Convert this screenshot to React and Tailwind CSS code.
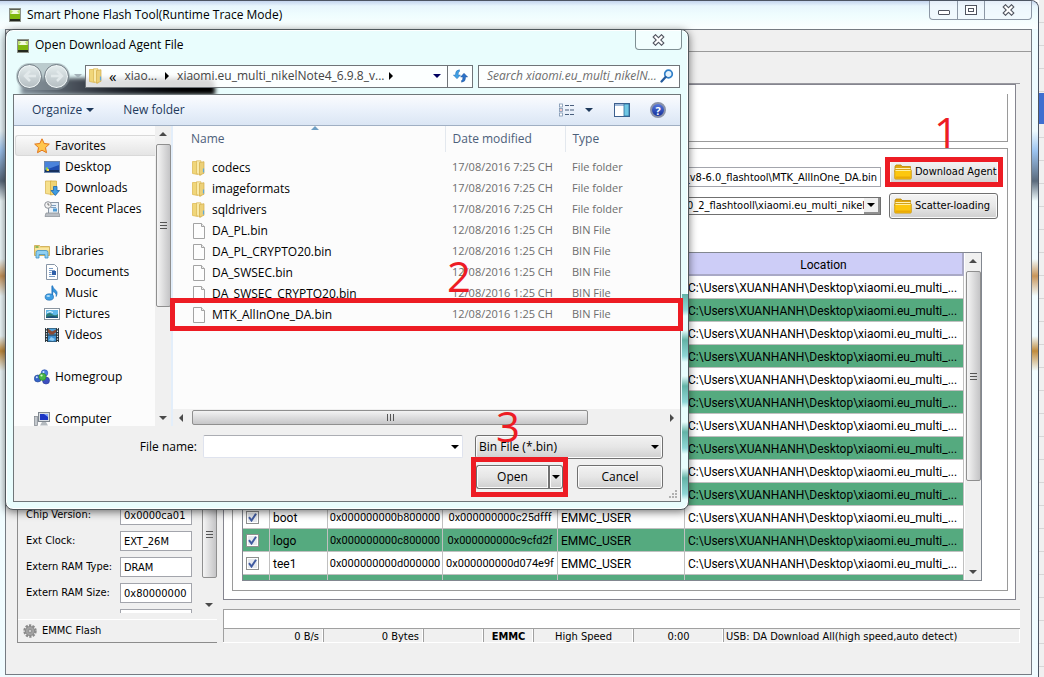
import React, { useState } from 'react';
import clsx from 'clsx';

const LOCATION = 'C:\\Users\\XUANHANH\\Desktop\\xiaomi.eu_multi_...';

const PARTITIONS = [
  ...Array.from({ length: 10 }, () => ({})),
  { name: 'boot', begin: '0x000000000b800000', end: '0x000000000c25dfff', region: 'EMMC_USER' },
  { name: 'logo', begin: '0x000000000c800000', end: '0x000000000c9cfd2f', region: 'EMMC_USER' },
  { name: 'tee1', begin: '0x000000000d000000', end: '0x000000000d074e9f', region: 'EMMC_USER' },
  { last: true },
];

const CHIP_FIELDS = [
  { id: 'chip-version', label: 'Chip Version:', value: '0x0000ca01' },
  { id: 'ext-clock', label: 'Ext Clock:', value: 'EXT_26M' },
  { id: 'ram-type', label: 'Extern RAM Type:', value: 'DRAM' },
  { id: 'ram-size', label: 'Extern RAM Size:', value: '0x80000000' },
];

const FILES = [
  { name: 'codecs', date: '17/08/2016 7:25 CH', folder: true },
  { name: 'imageformats', date: '17/08/2016 7:25 CH', folder: true },
  { name: 'sqldrivers', date: '17/08/2016 7:25 CH', folder: true },
  { name: 'DA_PL.bin', date: '12/08/2016 1:25 CH' },
  { name: 'DA_PL_CRYPTO20.bin', date: '12/08/2016 1:25 CH' },
  { name: 'DA_SWSEC.bin', date: '12/08/2016 1:25 CH' },
  { name: 'DA_SWSEC_CRYPTO20.bin', date: '12/08/2016 1:25 CH' },
  { name: 'MTK_AllInOne_DA.bin', date: '12/08/2016 1:25 CH' },
];

/* ---------- Icons ---------- */

function AppIcon() {
  return (
    <svg width="12" height="14" viewBox="0 0 12 14" className="shrink-0">
      <rect x="0.5" y="0.5" width="11" height="13" fill="#5b6056" stroke="#8d9289" />
      <rect x="1" y="2" width="10" height="4" fill="#b9dc6c" />
      <path d="M2.500 2l1.500 1.500h4L9.500 2M2.500 6Q3 3.500 6 3.500T9.500 6z" fill="#f2fadf" stroke="#f2fadf" strokeWidth="0.6" />
      <rect x="1" y="6" width="10" height="5" fill="#7fb80e" />
      <rect x="1" y="11" width="10" height="2" fill="#23281f" />
    </svg>
  );
}

function CloseGlyph() {
  return (
    <svg width="13" height="12" viewBox="0 0 13 12">
      <path d="M3.500 3l6 6M9.500 3l-6 6" stroke="#50545f" strokeWidth="4.400" strokeLinecap="square" />
      <path d="M3.500 3l6 6M9.500 3l-6 6" stroke="#fff" strokeWidth="2.200" strokeLinecap="square" />
    </svg>
  );
}

function Triangle({ dir = 'down', color = '#000', className }) {
  const paths = {
    down: 'M0 2h8L4 6z',
    up: 'M0 6h8L4 2z',
    left: 'M6 0v8L2 4z',
    right: 'M2 0v8l4-4z',
  };
  return (
    <svg width="8" height="8" viewBox="0 0 8 8" className={clsx('shrink-0', className)}>
      <path d={paths[dir]} fill={color} />
    </svg>
  );
}

function FolderIcon() {
  return (
    <svg width="16" height="16" viewBox="0 0 16 16" className="shrink-0">
      <path d="M1.500 1.500h5v13l-5-1z" fill="#f0d679" stroke="#dcb64a" strokeWidth="0.7" />
      <path d="M5.500 .8h4.500v14.400l-4.500-1.700z" fill="#f9eaa8" stroke="#d9b552" strokeWidth="0.7" />
      <path d="M8.500 2.500l4.500-.8v11.600l-4.500 1.900z" fill="#ecd078" stroke="#d3ac48" strokeWidth="0.7" />
      <path d="M12.500 8.500v4" stroke="#5fa9d8" strokeWidth="1.200" />
    </svg>
  );
}

function FileIcon() {
  return (
    <svg width="16" height="16" viewBox="0 0 16 16" className="shrink-0">
      <path d="M2.500.5h8l3 3v12h-11z" fill="#fdfdfd" stroke="#a3a3a3" />
      <path d="M10.500.5v3h3" fill="#ececec" stroke="#a3a3a3" />
    </svg>
  );
}

function YellowFolder() {
  return (
    <svg width="18" height="16" viewBox="0 0 18 16" className="shrink-0">
      <path d="M1 2.500L2 1h5l1 1.500h8.500V8H1z" fill="#e0a60c" stroke="#b98606" strokeWidth="0.8" />
      <path d="M1.500 4h15v3h-15z" fill="#fff3b8" />
      <rect x="0.7" y="5.500" width="16.600" height="9.600" rx="1" fill="#fcc70f" stroke="#c8930a" strokeWidth="0.8" />
      <path d="M1.500 6.500h15" stroke="#fff0a0" />
      <path d="M1.500 12.500h15v2h-15z" fill="#eaa907" />
    </svg>
  );
}

function GearIcon() {
  return (
    <svg width="14" height="14" viewBox="0 0 14 14" className="shrink-0">
      <circle cx="7" cy="7" r="5.400" fill="none" stroke="#8a8a8a" strokeWidth="2.600" strokeDasharray="2.200 1.200" />
      <circle cx="7" cy="7" r="4.600" fill="#a2a2a2" stroke="#8b8b8b" />
      <circle cx="7" cy="7" r="1.800" fill="#c9c9c9" stroke="#808080" strokeWidth="0.7" />
    </svg>
  );
}

const TREE_ART = {
  star: (
    <path
      d="M8 .8l2.200 4.700 5.100.6-3.800 3.500 1 5.100L8 12.200l-4.500 2.500 1-5.100L.7 6.100l5.100-.6z"
      fill="#ffc64d"
      stroke="#e2761b"
      strokeWidth="1"
    />
  ),
  desktop: (
    <>
      <rect x="0.5" y="2.500" width="15" height="11" fill="#1f4fb2" stroke="#6b86ad" />
      <path d="M1 3h14v3L1 11z" fill="#4a83db" />
      <rect x="1" y="11" width="14" height="2" fill="#16305f" />
      <path d="M1.500 9l2-1 1 3-2 1z" fill="#8ed04a" />
      <rect x="3" y="10" width="2" height="2" fill="#ffd34a" />
    </>
  ),
  downloads: (
    <>
      <path d="M1.500 1h6v13.500l-6-1z" fill="#f6e08c" stroke="#d6b04a" strokeWidth="0.7" />
      <path d="M6.500 1h6v13l-6 1z" fill="#efd375" stroke="#d3a936" strokeWidth="0.7" />
      <path d="M9.500 6.500h3.500v4h2.500l-4.200 5-4.300-5h2.500z" fill="#3f9be0" stroke="#1c66ac" strokeWidth="0.8" />
    </>
  ),
  recent: (
    <>
      <rect x="4.500" y="1.500" width="10" height="11" fill="#e9f1f8" stroke="#8a97a5" />
      <path d="M7 4.500h5M7 6.500h5" stroke="#7f9fbe" />
      <rect x="9" y="7.500" width="4" height="3" fill="#4e9bd4" />
      <path d="M2 12h13l1 3.500H1z" fill="#b9bec4" stroke="#868c93" strokeWidth="0.7" />
      <circle cx="4" cy="4" r="3.300" fill="#f4f4f4" stroke="#8d9298" />
      <path d="M4 2v2h1.500" fill="none" stroke="#555" strokeWidth="0.8" />
    </>
  ),
  libraries: (
    <>
      <path d="M.5 2.500h5l1 1h9v9H.5z" fill="#f3d980" stroke="#c9a548" strokeWidth="0.8" />
      <path d="M1.500 4h3" stroke="#6cae4c" strokeWidth="1.500" />
      <path d="M1 6h14" stroke="#fff3c4" />
      <path d="M2 15V9.500Q2 7.500 4 7.500h8q2 0 2 2V15h-3v-3.500H5V15z" fill="#8fd0f2" stroke="#3d8fc4" strokeWidth="0.8" />
    </>
  ),
  documents: (
    <>
      <path d="M2.500.5h8l3 3v12h-11z" fill="#fff" stroke="#8795a6" />
      <path d="M5 4.500h4M5 6.500h6M5 8.500h2.500M5 10.500h2.500M5 12.500h6" stroke="#7a9cc6" />
      <rect x="8" y="7" width="4" height="4" fill="#2f5fa8" />
    </>
  ),
  music: (
    <>
      <path d="M8.300 .5q.7 3 3.500 4.700 2.400 2 .4 6.300.3-4.200-3.900-5z" fill="#3796dd" stroke="#1d6cb2" strokeWidth="0.6" />
      <path d="M8.300 1v11" stroke="#2a7fc9" strokeWidth="1.600" />
      <ellipse cx="5.300" cy="12" rx="4.200" ry="3.200" fill="#3e9ee4" stroke="#1a65a8" strokeWidth="0.6" />
      <ellipse cx="4.300" cy="11" rx="1.800" ry="1" fill="#b0dcf8" />
    </>
  ),
  pictures: (
    <>
      <rect x="0.5" y="2.500" width="15" height="11" fill="#fff" stroke="#8a949e" />
      <rect x="2" y="4" width="12" height="8" fill="#5fb7e8" />
      <path d="M2 9q3-3.500 6-1t6 0v4H2z" fill="#2f7d79" />
      <path d="M2 11q6-2 12 0v1H2z" fill="#1b4f78" />
      <path d="M3 6.500q3-2 6 0" stroke="#e6f6ff" fill="none" />
    </>
  ),
  videos: (
    <>
      <rect x="1" y="1" width="14" height="14" fill="#263238" />
      <path d="M2.500 1v14M13.500 1v14" stroke="#eceff1" strokeWidth="1.200" strokeDasharray="1.300 1.300" />
      <rect x="4" y="1.500" width="8" height="6" fill="#4fa3dc" />
      <rect x="4" y="8.500" width="8" height="6" fill="#3d8fd0" />
      <path d="M4 1.500l4 3 4-2v3l-3 2H6l-2-2z" fill="#8a4a33" />
      <path d="M5 13l2-3 4 2-2 2z" fill="#8fcbf2" />
    </>
  ),
  homegroup: (
    <>
      <circle cx="10.500" cy="4" r="3.300" fill="#4a7de0" stroke="#2a4fa6" strokeWidth="0.6" />
      <circle cx="3.800" cy="9.500" r="3.500" fill="#3564c8" stroke="#20428f" strokeWidth="0.6" />
      <circle cx="12" cy="11.500" r="3.500" fill="#3c4fc0" stroke="#253590" strokeWidth="0.6" />
      <circle cx="8.500" cy="7.800" r="3.600" fill="#48b645" stroke="#2b8030" strokeWidth="0.6" />
      <circle cx="9.500" cy="3" r="1" fill="#d3e2ff" />
      <circle cx="2.800" cy="8.300" r="1" fill="#d3e2ff" />
      <circle cx="7.500" cy="6.500" r="1.100" fill="#d9f7cf" />
    </>
  ),
  computer: (
    <>
      <rect x="0.5" y="5.500" width="3" height="9" fill="#c3c8cd" stroke="#7d848b" strokeWidth="0.7" />
      <rect x="4.500" y="1.500" width="11" height="9" fill="#d8dde2" stroke="#7f878f" />
      <rect x="6" y="3" width="8" height="6" fill="#1c35c4" />
      <path d="M10 3h4v3z" fill="#7fa4ff" />
      <path d="M8 11h4l2 3.500H6z" fill="#b4babf" />
    </>
  ),
};

function TreeIcon({ name }) {
  return (
    <svg width="16" height="16" viewBox="0 0 16 16" className="shrink-0">
      {TREE_ART[name]}
    </svg>
  );
}

/* ---------- Shared parts ---------- */

function VScrollbar({ thumb, className }) {
  return (
    <div className={clsx('flex w-[16px] shrink-0 flex-col items-center bg-[#f0f0f0]', className)}>
      <Triangle dir="up" color="#4a4a4a" className="mt-1 mb-[6px]" />
      <div
        className={clsx(
          'flex w-[15px] shrink-0 flex-col items-center justify-center gap-[2px] rounded-[2px] border border-[#8f8f8f] bg-linear-to-r from-[#f5f5f5] to-[#c4c4c6]',
          thumb
        )}
      >
        <span className="h-px w-[7px] bg-[#555]" />
        <span className="h-px w-[7px] bg-[#555]" />
        <span className="h-px w-[7px] bg-[#555]" />
      </div>
      <Triangle color="#4a4a4a" className="mt-auto mb-1" />
    </div>
  );
}

function Step({ children, className }) {
  return (
    <span
      className={clsx(
        "pointer-events-none absolute z-20 font-['Open_Sans','Noto_Sans',sans-serif] text-[42px] leading-none font-medium text-[#ed1c24]",
        className
      )}
    >
      {children}
    </span>
  );
}

function Marker({ className }) {
  return <span className={clsx('pointer-events-none absolute z-10 border-[5px] border-[#ed1c24]', className)} />;
}

/* ---------- Main window ---------- */

function ToolButton({ children }) {
  return (
    <button className="flex h-[26px] w-full items-center gap-[3px] rounded-[3px] border border-[#707070] bg-linear-to-b from-[#f4f4f4] via-[#e8e8e8] to-[#cfcfcf] pl-1 whitespace-nowrap shadow-[inset_0_0_0_1px_#fbfbfb]">
      <YellowFolder />
      {children}
    </button>
  );
}

function ChipPanel() {
  return (
    <aside className="flex w-[200px] shrink-0 flex-col border-b border-l border-[#8c8c8c]">
      <div className="flex min-h-0 flex-1 overflow-hidden">
        <div className="flex flex-1 flex-col justify-end gap-[6px] overflow-hidden pl-2">
          {CHIP_FIELDS.map((f) => (
            <div key={f.id} className="flex h-[20px] shrink-0 items-center">
              <label htmlFor={f.id} className="w-[94px] whitespace-nowrap">
                {f.label}
              </label>
              <input
                id={f.id}
                readOnly
                defaultValue={f.value}
                className="h-[20px] w-[72px] border border-[#a3a5ac] bg-white px-[3px]"
              />
            </div>
          ))}
          <div className="ml-[94px] h-[4px] w-[72px] shrink-0 border border-b-0 border-[#a3a5ac] bg-white" />
        </div>
        <VScrollbar thumb="mt-[389px] h-[88px]" />
      </div>
      <button className="mt-[6px] flex h-[23px] items-center gap-[5px] border-t border-white pl-[5px]">
        <GearIcon />
        EMMC Flash
      </button>
    </aside>
  );
}

function RowCheckbox({ label }) {
  const [checked, setChecked] = useState(true);
  return (
    <span className="grid place-items-center">
      <input
        type="checkbox"
        aria-label={label}
        checked={checked}
        onChange={(e) => setChecked(e.target.checked)}
        className="col-start-1 row-start-1 size-[13px] appearance-none border border-[#8e8f8f] bg-[#e6e9ee] shadow-[inset_0_0_0_1px_#fff]"
      />
      {checked && (
        <svg width="9" height="9" viewBox="0 0 9 9" className="pointer-events-none col-start-1 row-start-1">
          <path d="M1 4.200l2.500 3.300L8 .8" fill="none" stroke="#3f5aa0" strokeWidth="2" />
        </svg>
      )}
    </span>
  );
}

function PartitionTable() {
  const cell = 'border-r border-b border-[#c0c0c0] p-0';
  return (
    <div className="mr-[25px] ml-[9px] flex min-h-0 flex-1 overflow-hidden border border-[#828790] bg-white">
      <div className="min-w-0 flex-1 overflow-hidden">
        <table className="w-full table-fixed border-separate border-spacing-0 font-[Roboto,'Noto_Sans',sans-serif] text-xs">
          <colgroup>
            <col className="w-[27px]" />
            <col className="w-[58px]" />
            <col className="w-[115px]" />
            <col className="w-[115px]" />
            <col className="w-[127px]" />
            <col />
          </colgroup>
          <thead>
            <tr className="h-[23px] bg-[#cdcdf7]">
              <th colSpan={5} className="border-b-2 border-[#a9a9c6] p-0" />
              <th className="border-r-2 border-b-2 border-[#a9a9c6] p-0 pt-[2px] font-normal">Location</th>
            </tr>
          </thead>
          <tbody>
            {PARTITIONS.map((p, i) => (
              <tr key={i} className={clsx('h-[23px] whitespace-nowrap', i % 2 ? 'bg-[#55aa7f]' : 'bg-white')}>
                <td className={clsx(cell, 'pr-[8px]')}>{p.name && <RowCheckbox label={p.name} />}</td>
                <td className={clsx(cell, 'pt-[2px] pl-[3px]')}>{p.name}</td>
                <td className={clsx(cell, 'pt-[2px] text-center text-[11px]')}>{p.begin}</td>
                <td className={clsx(cell, 'pt-[2px] text-center text-[11px]')}>{p.end}</td>
                <td className={clsx(cell, 'pt-[2px] pl-[3px]')}>{p.region}</td>
                <td className={clsx(cell, 'pt-[2px] pl-[3px]')}>{p.last ? '' : LOCATION}</td>
              </tr>
            ))}
          </tbody>
        </table>
      </div>
      <VScrollbar thumb="h-[210px]" className="ml-px" />
    </div>
  );
}

function StatusBar() {
  const cell = 'flex items-center border-l border-[#a0a0a0] pt-[2px] leading-none shadow-[inset_-1px_0_0_#fff]';
  return (
    <div className="flex h-[15px] border-t border-b border-t-[#a0a0a0] border-b-white whitespace-nowrap">
      <div className={clsx(cell, 'w-[100px] justify-end pr-1')}>0 B/s</div>
      <div className={clsx(cell, 'w-[100px] justify-end pr-1')}>0 Bytes</div>
      <div className={clsx(cell, 'w-[60px]')} />
      <div className={clsx(cell, 'w-[50px] justify-center font-bold')}>EMMC</div>
      <div className={clsx(cell, 'w-[100px] justify-center')}>High Speed</div>
      <div className={clsx(cell, 'w-[90px] justify-center')}>0:00</div>
      <div className={clsx(cell, 'flex-1 pl-[2px]')}>USB: DA Download All(high speed,auto detect)</div>
    </div>
  );
}

function DownloadPage() {
  return (
    <section className="flex min-w-0 flex-1 flex-col">
      <div className="flex min-h-0 flex-1 flex-col border-t border-[#9a9aa0]">
        <div className="mr-[4px] flex min-h-0 flex-1 flex-col border border-[#85858f] bg-white pt-[9px] pr-[7px] pb-[8px] pl-[8px]">
          <div className="h-[48px] shrink-0 border-r border-b border-[#9a9a9a]" />
          <div className="mt-[6px] flex min-h-0 flex-1 flex-col border border-[#9a9a9a] pb-[9px]">
            <div className="mt-[8px] grid grid-cols-[1fr_118px] items-center gap-x-[4px] gap-y-[6px] pr-[4px] pl-[9px]">
              <input
                aria-label="Download agent path"
                readOnly
                defaultValue="_v8-6.0_flashtool\MTK_AllInOne_DA.bin"
                className="h-[20px] w-full min-w-0 self-end border border-[#a3a5ac] bg-white px-[3px] text-right"
              />
              <div className="relative px-1 py-[2px]">
                <ToolButton>Download Agent</ToolButton>
                <Marker className="inset-0" />
                <Step className="bottom-[34px] left-[49px]">1</Step>
              </div>
              <div className="flex h-[18px] overflow-hidden border border-[#707070] bg-white">
                <div className="relative flex min-w-0 flex-1">
                  <select
                    aria-label="Scatter file"
                    className="w-full appearance-none overflow-hidden pr-[8px] pl-[444px]"
                  >
                    <option>0_2_flashtooll\xiaomi.eu_multi_nikelN</option>
                  </select>
                  <span className="pointer-events-none absolute inset-y-0 right-0 flex w-[16px] items-center justify-center border-r-2 border-b-2 border-[#909090] bg-[#f0f0f0]">
                    <Triangle />
                  </span>
                </div>
              </div>
              <div className="pr-[5px] pl-1">
                <ToolButton>Scatter-loading</ToolButton>
              </div>
            </div>
            <div className="h-[33px] shrink-0" />
            <PartitionTable />
          </div>
        </div>
      </div>
      <div className="mt-[9px] h-[19px] border-t border-l border-[#a0a0a0] bg-white" />
      <StatusBar />
    </section>
  );
}

function MainWindow() {
  return (
    <div className="flex min-w-0 flex-1 flex-col overflow-hidden rounded-tr-[8px] border-t border-r border-[#4d5563] bg-[linear-gradient(180deg,#dceefb_0,#effdff_30px,#eefbff_130px,#9cc4f0_150px,#5a6a7c_180px,#f2fdff_200px,#f2fdff_258px,#c8955a_275px,#f2fdff_295px,#f2fdff_335px,#c08b3c_350px,#f2fdff_370px,#f0fcff_100%)]">
      <header className="flex h-[28px] shrink-0 items-center bg-[linear-gradient(180deg,#c4d4ee_0,#e8f6fd_5px,#effdfe_14px,#fbffff_100%)] pl-[9px]">
        <AppIcon />
        <h1 className="ml-[6px] font-['Open_Sans','Noto_Sans',sans-serif] text-xs">
          Smart Phone Flash Tool(Runtime Trace Mode)
        </h1>
        <div className="mr-[6px] ml-auto flex h-[19px] self-start rounded-b-[4px] border border-t-0 border-[#8c97a5] bg-[#f1f7fc]/70">
          <button aria-label="Minimize" className="flex w-[28px] items-center justify-center border-r border-[#8c97a5]">
            <svg width="12" height="12" viewBox="0 0 12 12">
              <rect x="0.5" y="6.500" width="11" height="4" rx="0.5" fill="#fff" stroke="#50545f" />
            </svg>
          </button>
          <button aria-label="Maximize" className="flex w-[27px] items-center justify-center border-r border-[#8c97a5]">
            <svg width="12" height="10" viewBox="0 0 12 10">
              <rect x="0.5" y="0.5" width="11" height="9" fill="#fff" stroke="#50545f" />
              <rect x="3.500" y="3.500" width="5" height="3" fill="#fff" stroke="#50545f" />
            </svg>
          </button>
          <button aria-label="Close" className="flex w-[46px] items-center justify-center">
            <CloseGlyph />
          </button>
        </div>
      </header>
      <main className="mr-[6px] mb-[2px] ml-[5px] flex min-h-0 flex-1 flex-col border border-[#757b82] bg-[#f0f0f0]">
        <div className="h-[22px] shrink-0 border-b border-[#9a9a9a]" />
        <div className="flex min-h-0 flex-1 gap-[6px] pt-[31px] pr-[11px] pb-[31px] pl-[11px]">
          <ChipPanel />
          <DownloadPage />
        </div>
      </main>
    </div>
  );
}

/* ---------- Open file dialog ---------- */

function NavBar() {
  const round =
    'flex size-[25px] items-center justify-center rounded-full border border-[#727d85] bg-linear-to-b from-[#e6eeef] via-[#ccd5d8] to-[#b4bdc1] shadow-[inset_0_0_0_1px_#eef4f5]';
  return (
    <div className="relative flex h-[24px] items-center pr-[8px] pl-[10px]">
      <div className="flex items-center gap-[2px] rounded-full bg-[#8e9aa0]/50 p-px">
        <button aria-label="Back" className={round}>
          <svg width="14" height="12" viewBox="0 0 14 12">
            <path d="M13 6H2M7 1L2 6l5 5" fill="none" stroke="#e2e9eb" strokeWidth="2.500" />
          </svg>
        </button>
        <button aria-label="Forward" className={round}>
          <svg width="14" height="12" viewBox="0 0 14 12">
            <path d="M1 6h11M7 1l5 5-5 5" fill="none" stroke="#e2e9eb" strokeWidth="2.500" />
          </svg>
        </button>
      </div>
      <Triangle color="#a3b1b8" className="ml-[4px] mr-[3px]" />
      <div className="flex h-[23px] w-[388px] items-center border border-[#6f7478] bg-white/85 text-[#444]">
        <span className="ml-[2px]">
          <FolderIcon />
        </span>
        <span className="ml-[5px] text-[15px] leading-none text-black">«</span>
        <button className="ml-[8px]">xiao...</button>
        <Triangle dir="right" className="mx-[6px]" />
        <button className="whitespace-nowrap">xiaomi.eu_multi_nikelNote4_6.9.8_v...</button>
        <Triangle dir="right" className="ml-[3px]" />
        <Triangle color="#000060" className="mr-[6px] ml-auto" />
        <button aria-label="Refresh" className="flex h-full w-[25px] items-center justify-center border-l border-[#6f7478]">
          <svg width="15" height="14" viewBox="0 0 15 14">
            <path d="M6.500 .8Q2.500 1 2.500 5v1H.3L4 9.800 7.500 6H5.200V5q0-2 1.300-2.500z" fill="#3fa0e4" stroke="#1d5fa8" strokeWidth="0.4" />
            <path d="M8.500 13.200q4-.2 4-4.200V8h2.200L11 4.200 7.500 8h2.300v1q0 2-1.300 2.500z" fill="#2b72c8" stroke="#174a90" strokeWidth="0.4" />
          </svg>
        </button>
      </div>
      <div className="ml-[5px] flex h-[23px] min-w-0 flex-1 items-center border border-[#6f7478] bg-white/90 pr-[5px] pl-[8px]">
        <input
          aria-label="Search"
          placeholder="Search xiaomi.eu_multi_nikelN..."
          className="min-w-0 flex-1 bg-transparent italic outline-none placeholder:text-[#6d6d6d]"
        />
        <svg width="14" height="14" viewBox="0 0 14 14" className="shrink-0">
          <circle cx="8.500" cy="5" r="3.800" fill="#e3f2fc" stroke="#2f7fc8" strokeWidth="1.700" />
          <path d="M5.600 8L1.500 12.500" stroke="#245a9c" strokeWidth="2.300" strokeLinecap="round" />
        </svg>
      </div>
    </div>
  );
}

function Toolbar() {
  return (
    <div className="flex h-[31px] shrink-0 items-center border-b border-[#a0afc3] bg-linear-to-b from-[#fbfcfe] via-[#eaf1fb] to-[#dbe6f4] pr-[14px] pl-[18px] text-[#1e395b]">
      <button className="flex items-center gap-[4px]">
        Organize
        <Triangle color="#1e395b" />
      </button>
      <button className="ml-[29px]">New folder</button>
      <button aria-label="Change view" className="ml-auto flex items-center gap-[10px]">
        <svg width="16" height="14" viewBox="0 0 16 14">
          {[1, 5.5, 10].map((y) => (
            <g key={y}>
              <rect x="0.5" y={y} width="3" height="3" fill="#fff" stroke="#7c93b0" strokeWidth="0.8" />
              <path d={`M6 ${y + 1.5}h4M11 ${y + 1.5}h4`} stroke="#4a5f7d" />
            </g>
          ))}
          <rect x="1.500" y="6.500" width="1" height="1" fill="#d33" />
        </svg>
        <Triangle color="#1e395b" />
      </button>
      <button aria-label="Show preview pane" className="ml-[21px]">
        <svg width="16" height="14" viewBox="0 0 16 14">
          <rect x="0.5" y="0.5" width="15" height="13" fill="#fff" stroke="#3c5f8e" />
          <path d="M1 2h9" stroke="#7fa3cf" strokeWidth="1.500" />
          <rect x="10" y="1" width="5" height="12" fill="#6fc7e4" stroke="#2f6f9c" strokeWidth="0.8" />
        </svg>
      </button>
      <button
        aria-label="Help"
        className="ml-[20px] flex size-[16px] items-center justify-center rounded-full border-2 border-[#8b93a8] bg-linear-to-b from-[#5878dc] to-[#152f9c] text-[11px] leading-none font-bold text-white"
      >
        ?
      </button>
    </div>
  );
}

function TreeItem({ icon, children, nested, active }) {
  return (
    <li>
      <button
        className={clsx(
          'flex h-[21px] w-full items-center gap-[5px] rounded-l-[3px] border border-r-0',
          nested ? 'pl-[28px]' : 'pl-[18px]',
          active ? 'border-[#d9d9d9] bg-linear-to-b from-[#fafafa] to-[#e5e5e5]' : 'border-transparent'
        )}
      >
        <TreeIcon name={icon} />
        {children}
      </button>
    </li>
  );
}

function FolderTree() {
  return (
    <nav className="flex min-w-0 flex-1 flex-col gap-[21px] overflow-hidden pt-[9px] pl-px whitespace-nowrap">
      <ul>
        <TreeItem icon="star" active>Favorites</TreeItem>
        <TreeItem icon="desktop" nested>Desktop</TreeItem>
        <TreeItem icon="downloads" nested>Downloads</TreeItem>
        <TreeItem icon="recent" nested>Recent Places</TreeItem>
      </ul>
      <ul>
        <TreeItem icon="libraries">Libraries</TreeItem>
        <TreeItem icon="documents" nested>Documents</TreeItem>
        <TreeItem icon="music" nested>Music</TreeItem>
        <TreeItem icon="pictures" nested>Pictures</TreeItem>
        <TreeItem icon="videos" nested>Videos</TreeItem>
      </ul>
      <ul>
        <TreeItem icon="homegroup">Homegroup</TreeItem>
      </ul>
      <ul>
        <TreeItem icon="computer">Computer</TreeItem>
      </ul>
    </nav>
  );
}

function FileList() {
  return (
    <div className="flex min-w-0 flex-1 flex-col border-l-2 border-[#e3eefa] bg-[#fcfcfc]">
      <div className="relative flex-1">
        <Triangle dir="up" color="#6f9fc4" className="absolute -top-[2px] left-[138px]" />
        <table className="w-full table-fixed border-collapse whitespace-nowrap">
          <colgroup>
            <col className="w-[272px]" />
            <col className="w-[120px]" />
            <col />
          </colgroup>
          <thead>
            <tr className="h-[26px] text-left text-[#4c607a]">
              <th className="border-r border-[#e3e8ee] p-0 pl-[18px] font-normal">Name</th>
              <th className="border-r border-[#e3e8ee] p-0 pl-[7px] font-normal">Date modified</th>
              <th className="p-0 pl-[7px] font-normal">Type</th>
            </tr>
          </thead>
          <tbody>
            <tr className="h-[5px]" />
            {FILES.map((f) => (
              <tr key={f.name} className="h-[21px] text-[#6d6d6d]">
                <td className="p-0 pl-[18px] text-black">
                  <span className="flex items-center gap-[5px]">
                    {f.folder ? <FolderIcon /> : <FileIcon />}
                    {f.name}
                  </span>
                </td>
                <td className="p-0 pl-[7px] text-[11px]">{f.date}</td>
                <td className="p-0 pl-[7px] text-[11px]">{f.folder ? 'File folder' : 'BIN File'}</td>
              </tr>
            ))}
          </tbody>
        </table>
      </div>
      <div className="flex h-[17px] shrink-0 items-center bg-[#f0f0f0] px-[4px]">
        <Triangle dir="left" color="#4a4a4a" />
        <div className="ml-[7px] flex h-[15px] w-[396px] items-center justify-center gap-[2px] rounded-[2px] border border-[#8f8f8f] bg-linear-to-b from-[#f3f3f3] to-[#c6c6c8]">
          <span className="h-[7px] w-px bg-[#555]" />
          <span className="h-[7px] w-px bg-[#555]" />
          <span className="h-[7px] w-px bg-[#555]" />
        </div>
        <Triangle dir="right" color="#4a4a4a" className="ml-auto" />
      </div>
    </div>
  );
}

function DialogFooter() {
  const button =
    'h-[24px] rounded-[3px] border border-[#707070] bg-linear-to-b from-[#f2f2f2] via-[#e6e6e6] to-[#cfcfcf] shadow-[inset_0_0_0_1px_#fbfbfb]';
  return (
    <div className="flex flex-1 flex-col items-end gap-[7px] bg-[#f0f0f0] pt-[9px] pr-[17px]">
      <div className="flex h-[23px] items-center">
        <label htmlFor="file-name">File name:</label>
        <div className="relative ml-[6px]">
          <input
            id="file-name"
            className="h-[23px] w-[260px] rounded-[2px] border border-[#dfe3ee] border-t-[#abadb3] bg-white pr-[18px] pl-1"
          />
          <Triangle className="pointer-events-none absolute top-[8px] right-1" />
        </div>
        <div className="relative ml-[12px]">
          <select aria-label="File type" className={clsx(button, 'block w-[188px] appearance-none pr-[16px] pl-[3px]')}>
            <option>Bin File (*.bin)</option>
          </select>
          <Triangle className="pointer-events-none absolute top-[8px] right-1" />
        </div>
      </div>
      <div className="flex items-center gap-[14px]">
        <div className="relative flex">
          <button className={clsx(button, 'w-[72px] rounded-r-none border-r-0')}>Open</button>
          <button
            aria-label="Open options"
            className={clsx(button, 'flex w-[15px] items-center justify-center rounded-l-none border-l-2')}
          >
            <Triangle />
          </button>
          <Marker className="-inset-x-[5px] -inset-y-[8px]" />
          <Step className="bottom-[42px] left-[20px]">3</Step>
        </div>
        <button className={clsx(button, 'w-[86px]')}>Cancel</button>
      </div>
    </div>
  );
}

function OpenDialog() {
  return (
    <div
      role="dialog"
      aria-labelledby="dialog-title"
      className="absolute top-[29px] left-[5px] flex h-[481px] w-[684px] flex-col rounded-[8px] border border-[#50585c] bg-[#e9fdfd] font-['Open_Sans','Noto_Sans',sans-serif] text-xs shadow-[0_2px_8px_rgba(0,0,0,0.55),inset_0_0_0_1px_#fff]"
    >
      {/* Glass tints picked up from what lies behind the frame */}
      <div className="absolute top-[264px] right-0 bottom-[8px] w-[6px] bg-[repeating-linear-gradient(180deg,#62b3a6_0,#8fd6d6_16px,#e9fdfd_22px,#e9fdfd_36px,#62b3a6_46px)]" />
      <div className="absolute top-[48px] left-[15px] h-[17px] w-[194px] overflow-hidden rounded-t-[8px] bg-linear-to-r from-[#7e8b96] via-[#20242c] to-black blur-[2px]" />
      <div className="relative flex h-[34px] shrink-0 items-center pb-[2px] pl-[11px]">
        <AppIcon />
        <h2 id="dialog-title" className="ml-[6px] pb-[2px]">
          Open Download Agent File
        </h2>
        <button
          aria-label="Close dialog"
          className="mr-[6px] ml-auto flex h-[20px] w-[47px] items-center justify-center self-start rounded-b-[4px] border border-t-0 border-[#7f8f93] bg-white/40"
        >
          <CloseGlyph />
        </button>
      </div>
      <NavBar />
      <div className="relative mx-[7px] mt-[6px] mb-[7px] flex min-h-0 flex-1 flex-col border border-[#6f7679] bg-white">
        <Toolbar />
        <div className="flex h-[300px] shrink-0 bg-[#fcfcfc]">
          <div className="flex w-[157px] shrink-0">
            <FolderTree />
            <VScrollbar thumb="h-[163px]" />
          </div>
          <FileList />
        </div>
        <DialogFooter />
        <svg width="9" height="9" viewBox="0 0 9 9" className="absolute right-[2px] bottom-[2px]">
          <path d="M6 1h2M3 4h2M6 4h2M0 7h2M3 7h2M6 7h2" stroke="#b0b0b0" strokeWidth="2" />
        </svg>
      </div>
      <Marker className="top-[268px] right-[5px] left-[164px] h-[33px]" />
      <Step className="top-[225px] left-[441px]">2</Step>
    </div>
  );
}

export default function App() {
  return (
    <div className="relative flex h-screen min-h-[560px] overflow-hidden bg-white font-['DejaVu_Sans_Condensed','Noto_Sans',sans-serif] text-[11px] text-black">
      <MainWindow />
      <div className="w-[5px] shrink-0 bg-[repeating-linear-gradient(180deg,#f0f0f0_0,#f0f0f0_22px,#bdbdbd_23px)] pt-[93px]">
        <div className="h-[31px] bg-[#3f6fd0]" />
      </div>
      <OpenDialog />
    </div>
  );
}
